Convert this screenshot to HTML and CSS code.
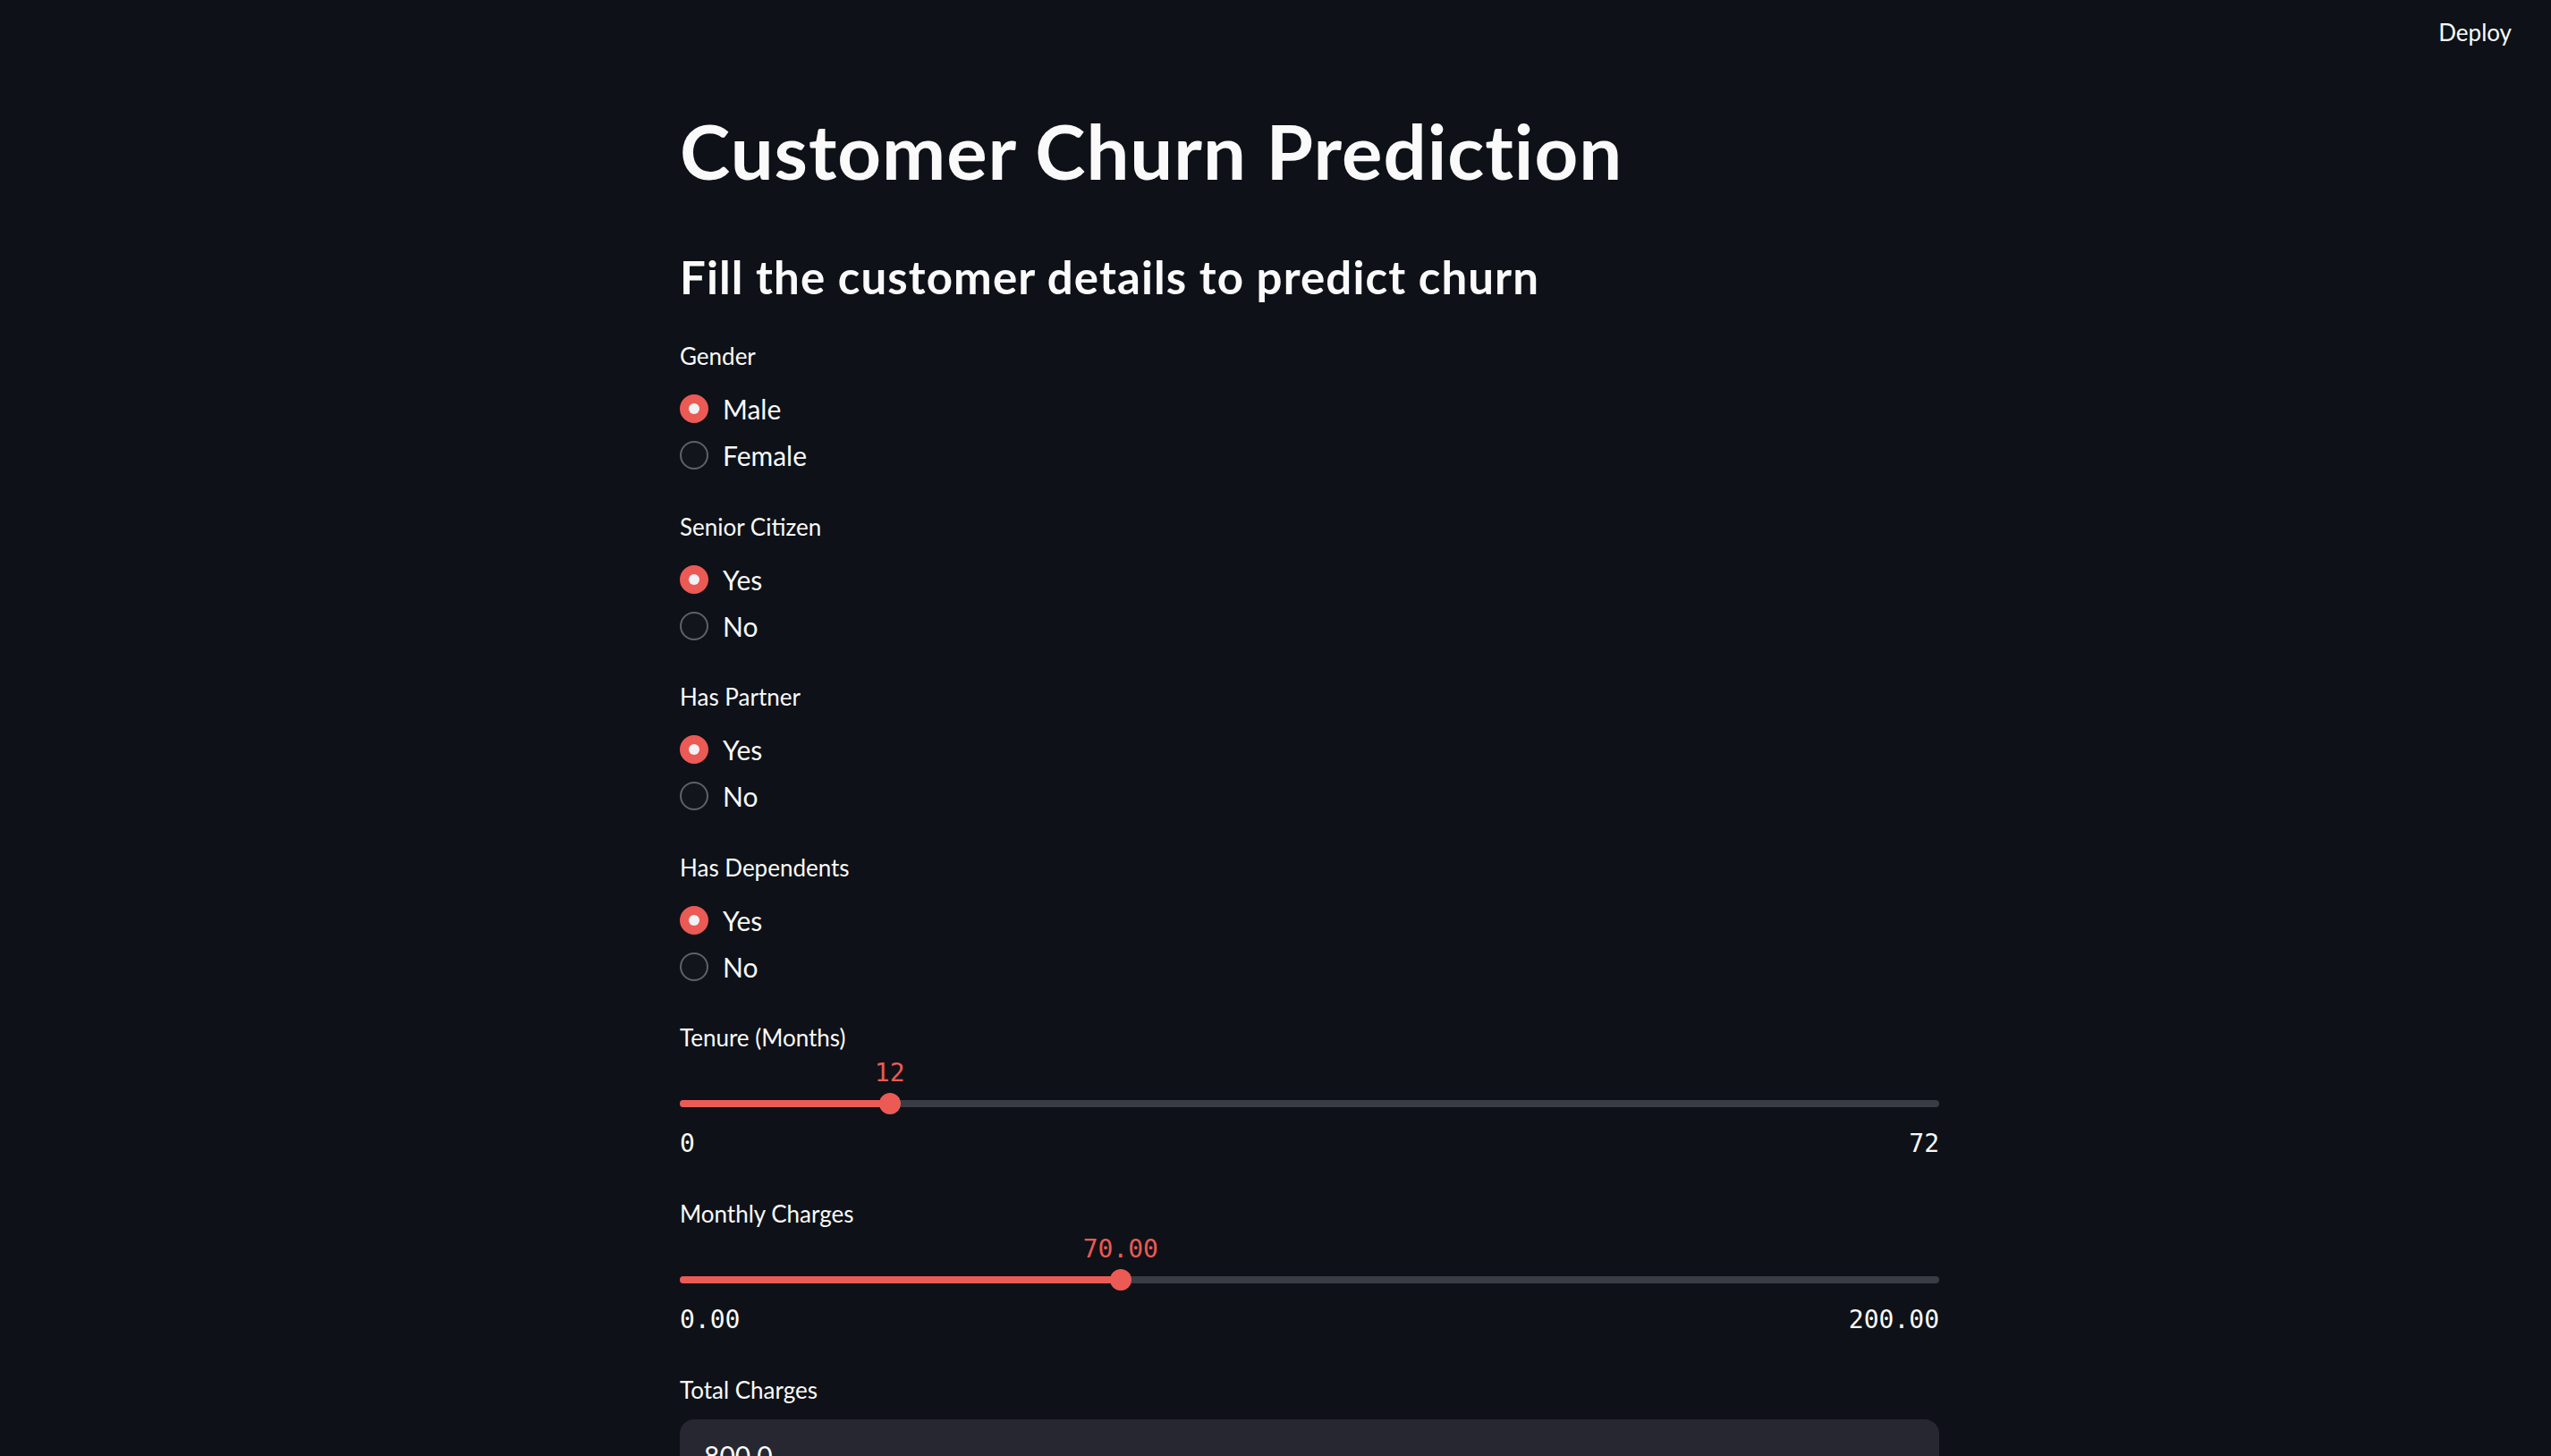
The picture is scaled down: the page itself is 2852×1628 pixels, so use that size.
FILE: index.html
```html
<!DOCTYPE html>
<html lang="en">
<head>
<meta charset="utf-8">
<title>Customer Churn Prediction</title>
<link rel="stylesheet" href="styles.css">
</head>
<body>
<header class="topbar">
  <span class="deploy">Deploy</span>
</header>
<main class="content">
  <h1 class="title">Customer Churn Prediction</h1>
  <h3 class="subtitle">Fill the customer details to predict churn</h3>

  <section class="group">
    <div class="label">Gender</div>
    <div class="radio checked"><span class="dot"></span><span class="opt">Male</span></div>
    <div class="radio"><span class="dot"></span><span class="opt">Female</span></div>
  </section>

  <section class="group">
    <div class="label">Senior Citizen</div>
    <div class="radio checked"><span class="dot"></span><span class="opt">Yes</span></div>
    <div class="radio"><span class="dot"></span><span class="opt">No</span></div>
  </section>

  <section class="group">
    <div class="label">Has Partner</div>
    <div class="radio checked"><span class="dot"></span><span class="opt">Yes</span></div>
    <div class="radio"><span class="dot"></span><span class="opt">No</span></div>
  </section>

  <section class="group">
    <div class="label">Has Dependents</div>
    <div class="radio checked"><span class="dot"></span><span class="opt">Yes</span></div>
    <div class="radio"><span class="dot"></span><span class="opt">No</span></div>
  </section>

  <section class="group slider-group">
    <div class="label">Tenure (Months)</div>
    <div class="slider">
      <div class="value-row"><span class="value" style="left: 16.667%">12</span></div>
      <div class="track-row">
        <div class="track">
          <div class="fill" style="width: 16.667%"></div>
          <span class="thumb" style="left: 16.667%"></span>
        </div>
      </div>
      <div class="ticks"><span>0</span><span>72</span></div>
    </div>
  </section>

  <section class="group slider-group">
    <div class="label">Monthly Charges</div>
    <div class="slider">
      <div class="value-row"><span class="value" style="left: 35%">70.00</span></div>
      <div class="track-row">
        <div class="track">
          <div class="fill" style="width: 35%"></div>
          <span class="thumb" style="left: 35%"></span>
        </div>
      </div>
      <div class="ticks"><span>0.00</span><span>200.00</span></div>
    </div>
  </section>

  <section class="group input-group">
    <div class="label">Total Charges</div>
    <div class="input">800.0</div>
  </section>
</main>
</body>
</html>
```

FILE: styles.css
```css
* {
  box-sizing: border-box;
}

html, body {
  margin: 0;
  padding: 0;
  background: #0e1117;
  color: #fafafa;
  font-family: Lato, "Noto Sans", sans-serif;
  overflow: hidden;
}

.topbar {
  height: 72px;
  display: flex;
  justify-content: flex-end;
  align-items: center;
  padding-right: 44px;
}

.deploy {
  font-size: 26px;
  line-height: 72px;
  color: #fafafa;
}

.content {
  width: 1408px;
  margin-left: 760px;
  display: flex;
  flex-direction: column;
}

.title {
  margin: 48px 0 0;
  height: 96px;
  line-height: 96px;
  font-size: 85px;
  letter-spacing: 1px;
  font-weight: 700;
  white-space: nowrap;
}

.subtitle {
  margin: 54px 0 0;
  height: 80px;
  line-height: 80px;
  font-size: 51px;
  letter-spacing: 1.1px;
  font-weight: 700;
  white-space: nowrap;
}

.group {
  display: flex;
  flex-direction: column;
  margin-top: 33.5px;
}

.subtitle + .group {
  margin-top: 28px;
}

.label {
  height: 40px;
  line-height: 40px;
  font-size: 26px;
  white-space: nowrap;
}

.label + .radio {
  margin-top: 13px;
}

.radio {
  height: 52px;
  display: flex;
  align-items: center;
  gap: 16px;
}

.dot {
  width: 32px;
  height: 32px;
  border-radius: 50%;
  border: 2px solid #5f6168;
  background: #12151c;
  flex: none;
  display: flex;
  align-items: center;
  justify-content: center;
}

.radio.checked .dot {
  background: #eb5a55;
  border-color: #eb5a55;
}

.radio.checked .dot::after {
  content: "";
  width: 12px;
  height: 12px;
  border-radius: 50%;
  background: #f0f2f6;
}

.opt {
  font-size: 30px;
  line-height: 52px;
}

.slider-group + .slider-group,
.slider-group + .input-group {
  margin-top: 38px;
}

.slider {
  display: flex;
  flex-direction: column;
}

.value-row {
  position: relative;
  height: 40px;
}

.value {
  position: absolute;
  top: 0;
  transform: translateX(-50%);
  line-height: 40px;
  font-family: "DejaVu Sans Mono", "Liberation Mono", monospace;
  font-size: 28px;
  color: #eb5a55;
}

.track-row {
  height: 28px;
  display: flex;
  align-items: center;
}

.track {
  position: relative;
  width: 100%;
  height: 8px;
  border-radius: 4px;
  background: #393c45;
}

.fill {
  height: 100%;
  border-radius: 4px;
  background: #eb5a55;
}

.thumb {
  position: absolute;
  top: 50%;
  width: 24px;
  height: 24px;
  border-radius: 50%;
  background: #eb5a55;
  transform: translate(-50%, -50%);
}

.ticks {
  margin-top: 11px;
  height: 40px;
  line-height: 40px;
  display: flex;
  justify-content: space-between;
  font-family: "DejaVu Sans Mono", "Liberation Mono", monospace;
  font-size: 28px;
  color: #fafafa;
}

.input-group .label + .input {
  margin-top: 13px;
}

.input {
  height: 80px;
  border-radius: 16px;
  background: #262730;
  padding-left: 27px;
  font-size: 30px;
  line-height: 80px;
  color: #fafafa;
}
```
